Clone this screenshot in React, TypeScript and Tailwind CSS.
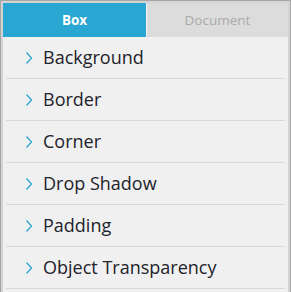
const items = [
  "Background",
  "Border",
  "Corner",
  "Drop Shadow",
  "Padding",
  "Object Transparency",
];

function Chevron() {
  return (
    <svg width="8" height="14" viewBox="0 0 8 14" className="shrink-0">
      <path d="M1.5 1.5 L6.5 7 L1.5 12.5" fill="none" stroke="#2ea6d4" strokeWidth="1.3" />
    </svg>
  );
}

export default function App() {
  return (
    <div className="w-[291px] h-[292px] bg-[#a6a6a6] pl-px pt-px pr-px font-['Open_Sans','Liberation_Sans',sans-serif]">
      <div className="h-full bg-[#d4d4d4] pl-[2px] pt-[2px] pr-[2px]">
        <div className="h-full bg-[#f0f0f0] flex flex-col">
          <div className="flex h-[34px] text-[13.5px]">
            <div className="w-[144px] bg-[#29a6d1] text-white font-bold flex items-center justify-center border-r border-[#f4f4f4]">
              Box
            </div>
            <div className="flex-1 bg-[#dcdcdc] text-[#ababab] flex items-center justify-center">
              Document
            </div>
          </div>
          <div className="flex flex-col px-[3px]">
            {items.map((t) => (
              <div
                key={t}
                className="h-[42px] flex items-center gap-[10px] pl-[19px] border-b border-[#d9d9d9] text-[18px] text-[#22222a]"
              >
                <Chevron />
                <span>{t}</span>
              </div>
            ))}
          </div>
        </div>
      </div>
    </div>
  );
}
